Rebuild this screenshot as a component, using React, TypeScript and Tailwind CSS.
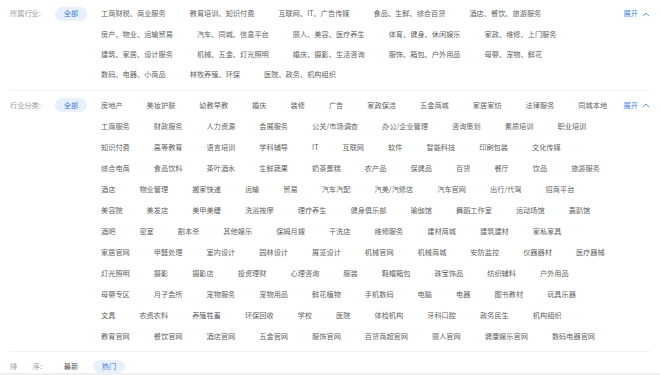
const industryRows: string[][] = [
  ['工商财税、商业服务', '教育培训、知识付费', '互联网、IT、广告传媒', '食品、生鲜、综合百货', '酒店、餐饮、旅游服务'],
  ['房产、物业、运输贸易', '汽车、同城、信息平台', '丽人、美容、医疗养生', '体育、健身、休闲娱乐', '家政、维修、上门服务'],
  ['建筑、家居、设计服务', '机械、五金、灯光照明', '婚庆、摄影、生活咨询', '服饰、箱包、户外用品', '母婴、宠物、鲜花'],
  ['数码、电器、小商品', '林牧养殖、环保', '医院、政务、机构组织'],
];

const categoryRows: string[][] = [
  ['房地产', '美妆护肤', '幼教早教', '婚庆', '装修', '广告', '家政保洁', '五金商城', '家居家纺', '法律服务', '同城本地'],
  ['工商服务', '财政服务', '人力资源', '会展服务', '公关/市场调查', '办公/企业管理', '咨询策划', '素质培训', '职业培训'],
  ['知识付费', '高等教育', '语言培训', '学科辅导', 'IT', '互联网', '软件', '智能科技', '印刷包装', '文化传媒'],
  ['综合电商', '食品饮料', '茶叶酒水', '生鲜蔬果', '奶茶蛋糕', '农产品', '保健品', '百货', '餐厅', '饮品', '旅游服务'],
  ['酒店', '物业管理', '搬家快递', '运输', '贸易', '汽车汽配', '汽美/汽修店', '汽车官网', '出行/代驾', '招商平台'],
  ['美容院', '美发店', '美甲美睫', '洗浴按摩', '理疗养生', '健身俱乐部', '瑜伽馆', '舞蹈工作室', '运动场馆', '轰趴馆'],
  ['酒吧', '密室', '剧本杀', '其他娱乐', '保姆月嫂', '干洗店', '维修服务', '建材商城', '建筑建材', '家私家具'],
  ['家居官网', '甲醛处理', '室内设计', '园林设计', '展览设计', '机械官网', '机械商城', '安防监控', '仪器器材', '医疗器械'],
  ['灯光照明', '摄影', '摄影店', '投资理财', '心理咨询', '服装', '鞋帽箱包', '珠宝饰品', '纺织辅料', '户外用品'],
  ['母婴专区', '月子会所', '宠物服务', '宠物用品', '鲜花植物', '手机数码', '电脑', '电器', '图书教材', '玩具乐器'],
  ['文具', '农资农料', '养殖牲畜', '环保回收', '学校', '医院', '体检机构', '牙科口腔', '政务民生', '机构组织'],
  ['教育官网', '餐饮官网', '酒店官网', '五金官网', '服饰官网', '百货商超官网', '丽人官网', '健康娱乐官网', '数码电器官网'],
];

function Pill({ label, active }: { label: string; active?: boolean }) {
  return (
    <span
      className={
        active
          ? 'flex h-[14px] w-[32px] items-center justify-center rounded-full bg-[#e8f0fd] text-[#3b7be0]'
          : 'flex h-[14px] w-[32px] items-center justify-center rounded-full text-[#555555]'
      }
    >
      {label}
    </span>
  );
}

function Expand() {
  return (
    <span className="flex items-center gap-[4px] text-[#3f84ee]">
      展开
      <svg width="8" height="5" viewBox="0 0 8 5" fill="none">
        <polyline points="0.8,4.2 4,1 7.2,4.2" stroke="#3f84ee" strokeWidth="0.8" />
      </svg>
    </span>
  );
}

interface FilterSectionProps {
  label: string;
  rows: string[][];
  rowClass: string;
  className: string;
}

function FilterSection({ label, rows, rowClass, className }: FilterSectionProps) {
  return (
    <div className={`flex border-b border-[#f1f1f1] ${className}`}>
      {/* Label */}
      <div className={`flex w-[45px] shrink-0 items-center text-[#9a9a9a] ${rowClass}`}>{label}</div>

      {/* All pill */}
      <div className={`flex w-[34px] shrink-0 items-center ${rowClass}`}>
        <Pill label="全部" active />
      </div>

      {/* Options */}
      <div className="flex flex-1 flex-col">
        {rows.map((row, i) => (
          <div key={i} className={`flex items-center text-[#5f5f5f] ${rowClass}`}>
            {row.map((item) => (
              <span key={item} className="whitespace-nowrap px-[12px]">
                {item}
              </span>
            ))}
          </div>
        ))}
      </div>

      {/* Expand toggle */}
      <div className={`flex shrink-0 items-center ${rowClass}`}>
        <Expand />
      </div>
    </div>
  );
}

export default function App() {
  return (
    <div className="h-[375px] w-[660px] overflow-hidden bg-white text-[7.2px] leading-none font-['Noto_Sans_CJK_SC','Liberation_Sans',sans-serif]">
      <div className="px-[10px]">
        <FilterSection label="所属行业:" rows={industryRows} rowClass="h-[20.2px]" className="pt-[4px] pb-[5px]" />
        <FilterSection label="行业分类:" rows={categoryRows} rowClass="h-[21px]" className="pt-[4px] pb-[4px]" />

        {/* Sort */}
        <div className="flex items-center pt-[8px]">
          <div className="flex w-[45px] shrink-0">
            <span className="flex w-[32px] justify-between text-[#9a9a9a]">
              <span>排</span>
              <span>序:</span>
            </span>
          </div>
          <div className="flex gap-[6px]">
            <span className="flex h-[13px] w-[32px] items-center justify-center text-[#555555]">最新</span>
            <span className="flex h-[13px] w-[32px] items-center justify-center rounded-full bg-[#e8f0fd] text-[#3b7be0]">
              热门
            </span>
          </div>
        </div>
      </div>
      <div className="h-[10px] bg-[#efefef]" />
    </div>
  );
}
